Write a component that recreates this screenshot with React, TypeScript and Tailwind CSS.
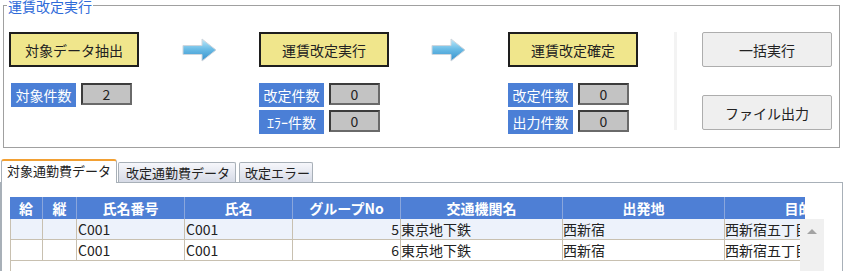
const cols = [
  { w: "w-[33px]", label: "給" },
  { w: "w-[34px]", label: "縦" },
  { w: "w-[108px]", label: "氏名番号" },
  { w: "w-[108px]", label: "氏名" },
  { w: "w-[108px]", label: "グループNo" },
  { w: "w-[162px]", label: "交通機関名" },
  { w: "w-[162px]", label: "出発地" },
  { w: "w-[162px]", label: "目的地" },
];

const rows = [
  { no: "C001", name: "C001", group: "5", line: "東京地下鉄", from: "西新宿", to: "西新宿五丁目" },
  { no: "C001", name: "C001", group: "6", line: "東京地下鉄", from: "西新宿", to: "西新宿五丁目" },
];

function Arrow() {
  return (
    <svg width="35" height="24" viewBox="0 0 35 24">
      <defs>
        <linearGradient id="arrowFill" x1="0" y1="0" x2="0" y2="1">
          <stop offset="0" stopColor="#bfeafa" />
          <stop offset="0.45" stopColor="#6cbde6" />
          <stop offset="1" stopColor="#3590cc" />
        </linearGradient>
      </defs>
      <path
        d="M1 7.5 H20 V1 L34 12 L20 23 V16.5 H1 Z"
        fill="url(#arrowFill)"
        stroke="#cfd6dd"
        strokeWidth="1"
        strokeLinejoin="round"
      />
    </svg>
  );
}

function YellowButton({ children }: { children: string }) {
  return (
    <div className="w-[130px] h-[35px] bg-[#f0e68c] border-2 border-[#1e1e1e] flex items-center justify-center text-[14px] leading-[16px]">
      {children}
    </div>
  );
}

function Count({ label, value }: { label: string; value: string }) {
  return (
    <div className="flex items-start gap-[5px]">
      <div className="w-[65px] h-[24px] bg-[#4b7fd6] text-white text-[14px] leading-[24px] text-center">
        {label}
      </div>
      <div className="w-[51px] h-[22px] bg-[#c3c3c3] border-2 border-t-[#3c3c3c] border-l-[#3c3c3c] border-r-[#6a6a6a] border-b-[#6a6a6a] text-[14px] leading-[18px] text-center">
        {value}
      </div>
    </div>
  );
}

function GrayButton({ children }: { children: string }) {
  return (
    <div className="w-[130px] h-[35px] bg-[#efefef] border border-[#adadad] rounded-[2px] flex items-center justify-center text-[14px] leading-[16px]">
      {children}
    </div>
  );
}

export default function App() {
  return (
    <div className="w-[844px] h-[271px] overflow-hidden bg-white text-[#222] font-['Noto_Sans_CJK_JP','Noto_Sans',sans-serif]">
      {/* 運賃改定実行 */}
      <fieldset className="ml-[3px] w-[837px] h-[148px] border border-[#a0a0a0] pl-[3px]">
        <legend className="px-[1px] text-[14px] leading-[10px] text-[#2f6bd9]">
          <span className="relative top-[1px]">運賃改定実行</span>
        </legend>
        <div className="flex mt-[22px] pl-[2px]">
          <div className="w-[130px] flex flex-col">
            <YellowButton>対象データ抽出</YellowButton>
            <div className="mt-[16px] ml-[2px]">
              <Count label="対象件数" value="2" />
            </div>
          </div>
          <div className="w-[120px] h-[35px] flex items-center justify-center">
            <Arrow />
          </div>
          <div className="w-[130px] flex flex-col">
            <YellowButton>運賃改定実行</YellowButton>
            <div className="mt-[16px] flex flex-col gap-[3px]">
              <Count label="改定件数" value="0" />
              <Count label="ｴﾗｰ件数" value="0" />
            </div>
          </div>
          <div className="w-[119px] h-[35px] flex items-center justify-center">
            <Arrow />
          </div>
          <div className="w-[130px] flex flex-col">
            <YellowButton>運賃改定確定</YellowButton>
            <div className="mt-[16px] flex flex-col gap-[3px]">
              <Count label="改定件数" value="0" />
              <Count label="出力件数" value="0" />
            </div>
          </div>
          <div className="w-[36px]" />
          <div className="w-[3px] h-[98px] bg-[#f3f3f3]" />
          <div className="w-[25px]" />
          <div className="w-[130px] flex flex-col gap-[28px]">
            <GrayButton>一括実行</GrayButton>
            <GrayButton>ファイル出力</GrayButton>
          </div>
        </div>
      </fieldset>

      {/* tabs */}
      <div className="mt-[11px] flex items-end pl-[1px] relative z-10">
        <div className="w-[116px] h-[24px] -mb-px bg-white border-x border-[#a8b0b8] border-t-2 border-t-[#f2a033] rounded-t-[3px] text-[13px] leading-[20px] pl-[5px]">
          対象通勤費データ
        </div>
        <div className="ml-[1px] w-[118px] h-[20px] border border-b-0 border-[#a8b0b8] rounded-t-[2px] bg-gradient-to-b from-[#f6f7fb] to-[#d6dae6] text-[13px] leading-[19px] pl-[7px]">
          改定通勤費データ
        </div>
        <div className="ml-[3px] w-[74px] h-[20px] border border-b-0 border-[#a8b0b8] rounded-t-[2px] bg-gradient-to-b from-[#f6f7fb] to-[#d6dae6] text-[13px] leading-[19px] pl-[5px]">
          改定エラー
        </div>
      </div>

      <div className="w-[843px] h-[100px] border border-[#a8b0b8] border-l-2 pl-[8px] pt-[14px]">
        <div className="w-[795px] h-[22px] overflow-hidden bg-[#4e7fd5] flex">
          {cols.map((c) => (
            <div
              key={c.label}
              className={`${c.w} shrink-0 h-[22px] border-r border-[#8aa6dc] text-white font-bold text-[14px] leading-[22px] text-center whitespace-nowrap`}
            >
              {c.label}
            </div>
          ))}
        </div>
        <div className="flex">
          <div className="w-[790px] overflow-hidden border-l border-[#c8c0b0]">
            {rows.map((r, i) => (
              <div
                key={i}
                className={`flex h-[21px] border-b border-[#c8c0b0] text-[14px] leading-[20px] whitespace-nowrap ${i === 0 ? "bg-[#edf2fb]" : "bg-white"}`}
              >
                <div className="w-[32px] shrink-0 border-r border-[#c8c0b0]" />
                <div className="w-[34px] shrink-0 border-r border-[#c8c0b0]" />
                <div className="w-[108px] shrink-0 border-r border-[#c8c0b0] pl-[1px]">{r.no}</div>
                <div className="w-[108px] shrink-0 border-r border-[#c8c0b0] pl-[1px]">{r.name}</div>
                <div className="w-[108px] shrink-0 border-r border-[#c8c0b0] pr-[1px] text-right">{r.group}</div>
                <div className="w-[162px] shrink-0 border-r border-[#c8c0b0]">{r.line}</div>
                <div className="w-[162px] shrink-0 border-r border-[#c8c0b0]">{r.from}</div>
                <div className="w-[162px] shrink-0 border-r border-[#c8c0b0]">{r.to}</div>
              </div>
            ))}
          </div>
          <div className="w-[24px] h-[60px] bg-[#f0f0f0] flex justify-center pt-[10px]">
            <div className="w-0 h-0 border-x-[5px] border-x-transparent border-b-[5px] border-b-[#a3a3a3]" />
          </div>
        </div>
      </div>
    </div>
  );
}
